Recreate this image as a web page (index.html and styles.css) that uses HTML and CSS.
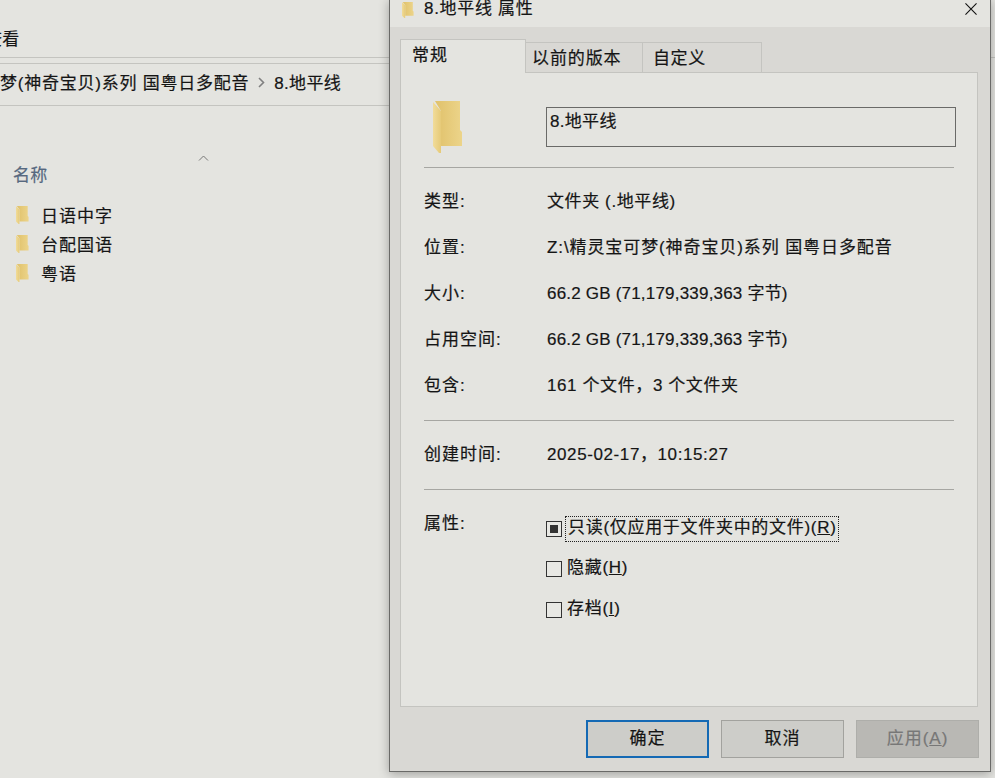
FILE: index.html
```html
<!DOCTYPE html>
<html lang="zh-CN">

<head>
    <meta charset="UTF-8">
    <title>8.地平线 属性</title>
    <link rel="stylesheet" href="styles.css">
</head>

<body>
    <svg class="defs" width="0" height="0">
        <defs>
            <linearGradient id="folderBack" x1="0" y1="0" x2="1" y2="0">
                <stop offset="0" stop-color="#e0c16a" />
                <stop offset="1" stop-color="#ecd48a" />
            </linearGradient>
            <linearGradient id="folderLeaf" x1="0" y1="0" x2="1" y2="0">
                <stop offset="0" stop-color="#f1dc9a" />
                <stop offset="1" stop-color="#e6ca78" />
            </linearGradient>
            <symbol id="folder" viewBox="0 0 30 52" preserveAspectRatio="none">
                <path fill="url(#folderBack)" d="M2 0H27V29L29 31V45H8V10Z" />
                <path fill="url(#folderLeaf)" d="M0 1L8 10V52L6 52L0 45Z" />
            </symbol>
        </defs>
    </svg>

    <!-- explorer window behind the dialog -->
    <div class="explorer">
        <div class="menu-bar"><span class="menu-item">查看</span></div>
        <div class="address-bar">
            <span class="crumb crumb-long">梦(神奇宝贝)系列 国粤日多配音</span>
            <svg class="crumb-arrow" width="7" height="11" viewBox="0 0 7 11">
                <path d="M1 1L5.5 5.5L1 10" fill="none" stroke="#808080" stroke-width="1.6" />
            </svg>
            <span class="crumb">8.地平线</span>
        </div>
        <div class="file-list">
            <div class="sort-row">
                <svg width="11" height="6" viewBox="0 0 11 6">
                    <path d="M1 5.5L5.5 1L10 5.5" fill="none" stroke="#777" stroke-width="1" />
                </svg>
            </div>
            <div class="list-header">名称</div>
            <div class="file-row"><svg class="folder-small"><use href="#folder" /></svg><span>日语中字</span></div>
            <div class="file-row"><svg class="folder-small"><use href="#folder" /></svg><span>台配国语</span></div>
            <div class="file-row"><svg class="folder-small"><use href="#folder" /></svg><span>粤语</span></div>
        </div>
    </div>

    <!-- properties dialog -->
    <div class="dialog">
        <div class="title-bar">
            <svg class="folder-title"><use href="#folder" /></svg>
            <span class="title-text">8.地平线 属性</span>
            <svg class="close-icon" width="12" height="12" viewBox="0 0 13 13">
                <path d="M0.5 0.5L12.5 12.5M12.5 0.5L0.5 12.5" stroke="#111" stroke-width="1.2" fill="none" />
            </svg>
        </div>
        <div class="dialog-body">
            <div class="tabs">
                <div class="tab tab-active">常规</div>
                <div class="tab tab-second">以前的版本</div>
                <div class="tab tab-third">自定义</div>
            </div>
            <div class="panel">
                <div class="name-row">
                    <svg class="folder-big"><use href="#folder" /></svg>
                    <div class="name-box">8.地平线</div>
                </div>
                <hr class="sep">
                <div class="info-group">
                    <div class="info-row"><span class="info-label">类型:</span><span class="value-mixed">文件夹 (.地平线)</span></div>
                    <div class="info-row"><span class="info-label">位置:</span><span class="value-cjk">Z:\精灵宝可梦(神奇宝贝)系列 国粤日多配音</span></div>
                    <div class="info-row"><span class="info-label">大小:</span><span class="value-latin">66.2 GB (71,179,339,363 字节)</span></div>
                    <div class="info-row"><span class="info-label">占用空间:</span><span class="value-latin">66.2 GB (71,179,339,363 字节)</span></div>
                    <div class="info-row"><span class="info-label">包含:</span><span class="value-mixed">161 个文件，3 个文件夹</span></div>
                </div>
                <hr class="sep">
                <div class="info-row info-single"><span class="info-label">创建时间:</span><span class="value-mixed">2025-02-17，10:15:27</span></div>
                <hr class="sep">
                <div class="attr-group">
                    <span class="info-label attr-label">属性:</span>
                    <div class="attr-list">
                        <div class="attr-row attr-first"><span class="check check-mixed"></span><span class="focus-box">只读(仅应用于文件夹中的文件)(<u>R</u>)</span></div>
                        <div class="attr-row"><span class="check"></span><span class="attr-text">隐藏(<u>H</u>)</span></div>
                        <div class="attr-row"><span class="check"></span><span class="attr-text">存档(<u>I</u>)</span></div>
                    </div>
                </div>
            </div>
            <div class="buttons">
                <button type="button" class="btn btn-default">确定</button>
                <button type="button" class="btn">取消</button>
                <button type="button" class="btn btn-disabled">应用(<u>A</u>)</button>
            </div>
        </div>
    </div>
</body>

</html>
```

FILE: styles.css
```css
body {
    margin: 0;
    width: 995px;
    height: 778px;
    overflow: hidden;
    position: relative;
    background-color: #e4e4e0;
    color: #151515;
    font-family: "Liberation Sans", "Noto Sans CJK SC", sans-serif;
    font-size: 17px;
    letter-spacing: 0.3px;
    -webkit-text-stroke: 0.2px;
}

.defs {
    position: absolute;
}

/* explorer behind */
.explorer {
    height: 778px;
    overflow: hidden;
}

.menu-bar {
    height: 58px;
    box-sizing: border-box;
    padding-top: 30px;
    border-bottom: 1px solid #c4c4c0;
    line-height: 20px;
}

.menu-item {
    display: block;
    margin-left: -15px;
}

.address-bar {
    margin-top: 5px;
    height: 43px;
    box-sizing: border-box;
    border-top: 1px solid #c4c4c0;
    border-bottom: 1px solid #c4c4c0;
    display: flex;
    align-items: center;
    justify-content: flex-end;
    gap: 9px;
    padding: 0 48px 7px 0;
    width: 389px;
    white-space: nowrap;
    overflow: hidden;
}

.crumb {
    flex: none;
}

.crumb-long {
    letter-spacing: 0.77px;
}

.crumb-arrow {
    flex: none;
    margin-top: 3px;
}

.file-list {
    padding-left: 13px;
}

.sort-row {
    height: 58px;
    box-sizing: border-box;
    padding: 49px 0 0 185px;
    line-height: 0;
}

.list-header {
    height: 36px;
    box-sizing: border-box;
    padding-top: 1px;
    color: #56687f;
    line-height: 22px;
}

.file-row {
    display: flex;
    align-items: center;
    gap: 12px;
    height: 29px;
    padding-left: 3px;
    letter-spacing: 1px;
}

.folder-small {
    width: 13px;
    height: 18px;
    flex: none;
}

/* dialog */
.dialog {
    position: absolute;
    left: 389px;
    top: -1px;
    width: 602px;
    height: 773px;
    box-sizing: border-box;
    border: 1px solid #6a6a68;
    border-top: none;
    background-color: #d9d8d4;
    box-shadow: 0 2px 10px rgba(0, 0, 0, 0.3);
    display: flex;
    flex-direction: column;
}

.title-bar {
    height: 28px;
    flex: none;
    background-color: #e4e4e0;
    display: flex;
    align-items: flex-start;
    gap: 10px;
    padding: 0 13px 0 12px;
    line-height: 20px;
}

.folder-title {
    width: 12px;
    height: 16px;
    flex: none;
    margin-top: 3px;
}

.title-text {
    flex: 1;
    letter-spacing: 0.7px;
}

.close-icon {
    flex: none;
    margin-top: 4px;
}

.dialog-body {
    flex: 1;
    display: flex;
    flex-direction: column;
    padding: 12px 12px 13px 10px;
}

.tabs {
    display: flex;
    align-items: flex-end;
    height: 34px;
    flex: none;
    position: relative;
    z-index: 1;
    margin-bottom: -1px;
}

.tab {
    height: 31px;
    box-sizing: border-box;
    border: 1px solid #c4c4c0;
    border-bottom: none;
    border-left: none;
    padding: 5px 0 0 6px;
    line-height: 22px;
    letter-spacing: 0.9px;
}

.tab-active {
    width: 126px;
    height: 34px;
    background-color: #e4e4e0;
    border-left: 1px solid #c4c4c0;
    padding: 5px 0 0 11px;
}

.tab-second {
    width: 117px;
}

.tab-third {
    width: 119px;
    padding-left: 10px;
    letter-spacing: 0.6px;
}

.panel {
    flex: 1;
    width: 578px;
    box-sizing: border-box;
    border: 1px solid #c4c4c0;
    background-color: #e4e4e0;
    padding: 0 23px;
}

.name-row {
    display: flex;
    align-items: flex-start;
    height: 94px;
}

.folder-big {
    width: 30px;
    height: 52px;
    flex: none;
    margin: 28px 0 0 9px;
}

.name-box {
    width: 410px;
    height: 40px;
    box-sizing: border-box;
    margin: 34px 0 0 83px;
    flex: none;
    border: 1px solid #6a6a68;
    padding: 3px 3px;
    line-height: 22px;
}

.sep {
    margin: 0;
    width: 530px;
    height: 1px;
    border: none;
    background-color: #a6a6a2;
}

.info-group {
    padding: 8px 0 14px;
}

.info-row {
    display: flex;
    align-items: center;
    height: 46px;
}

.info-single {
    height: 68px;
    box-sizing: border-box;
    padding-bottom: 6px;
}

.info-label {
    width: 123px;
    flex: none;
    letter-spacing: 1px;
}

.value-mixed {
    letter-spacing: 0.6px;
}

.value-cjk {
    letter-spacing: 0.9px;
}

.value-latin {
    letter-spacing: 0.2px;
}

.attr-group {
    display: flex;
    align-items: flex-start;
}

.attr-label {
    margin-top: 23px;
    line-height: 22px;
}

.attr-list {
    display: flex;
    flex-direction: column;
    margin: 27px 0 0 -1px;
}

.attr-row {
    display: flex;
    align-items: center;
    height: 24px;
    margin-bottom: 17px;
    white-space: nowrap;
    line-height: 22px;
    letter-spacing: 0.7px;
}

.attr-first {
    margin-bottom: 16px;
}

.check {
    width: 16px;
    height: 16px;
    box-sizing: border-box;
    flex: none;
    border: 1px solid #333;
    background-color: #e8e8e4;
    margin-right: 4px;
    display: flex;
    align-items: center;
    justify-content: center;
}

.check-mixed::after {
    content: "";
    width: 8px;
    height: 8px;
    background-color: #333;
}

.focus-box {
    outline: 1px dotted #222;
    padding: 0 1px 2px 2px;
}

.attr-text {
    margin-left: 1px;
    padding-bottom: 2px;
}

.buttons {
    display: flex;
    justify-content: flex-end;
    gap: 12px;
    margin-top: 13px;
    margin-right: -1px;
    flex: none;
}

.btn {
    width: 123px;
    height: 38px;
    box-sizing: border-box;
    border: 1px solid #a2a29e;
    background-color: #cdcdc9;
    color: #151515;
    font: inherit;
    letter-spacing: 1px;
    padding: 0 0 6px;
}

.btn-default {
    border: 2px solid #1469b4;
}

.btn-disabled {
    background-color: #b9b8b4;
    border-color: #aeaeaa;
    color: #777;
}
```
